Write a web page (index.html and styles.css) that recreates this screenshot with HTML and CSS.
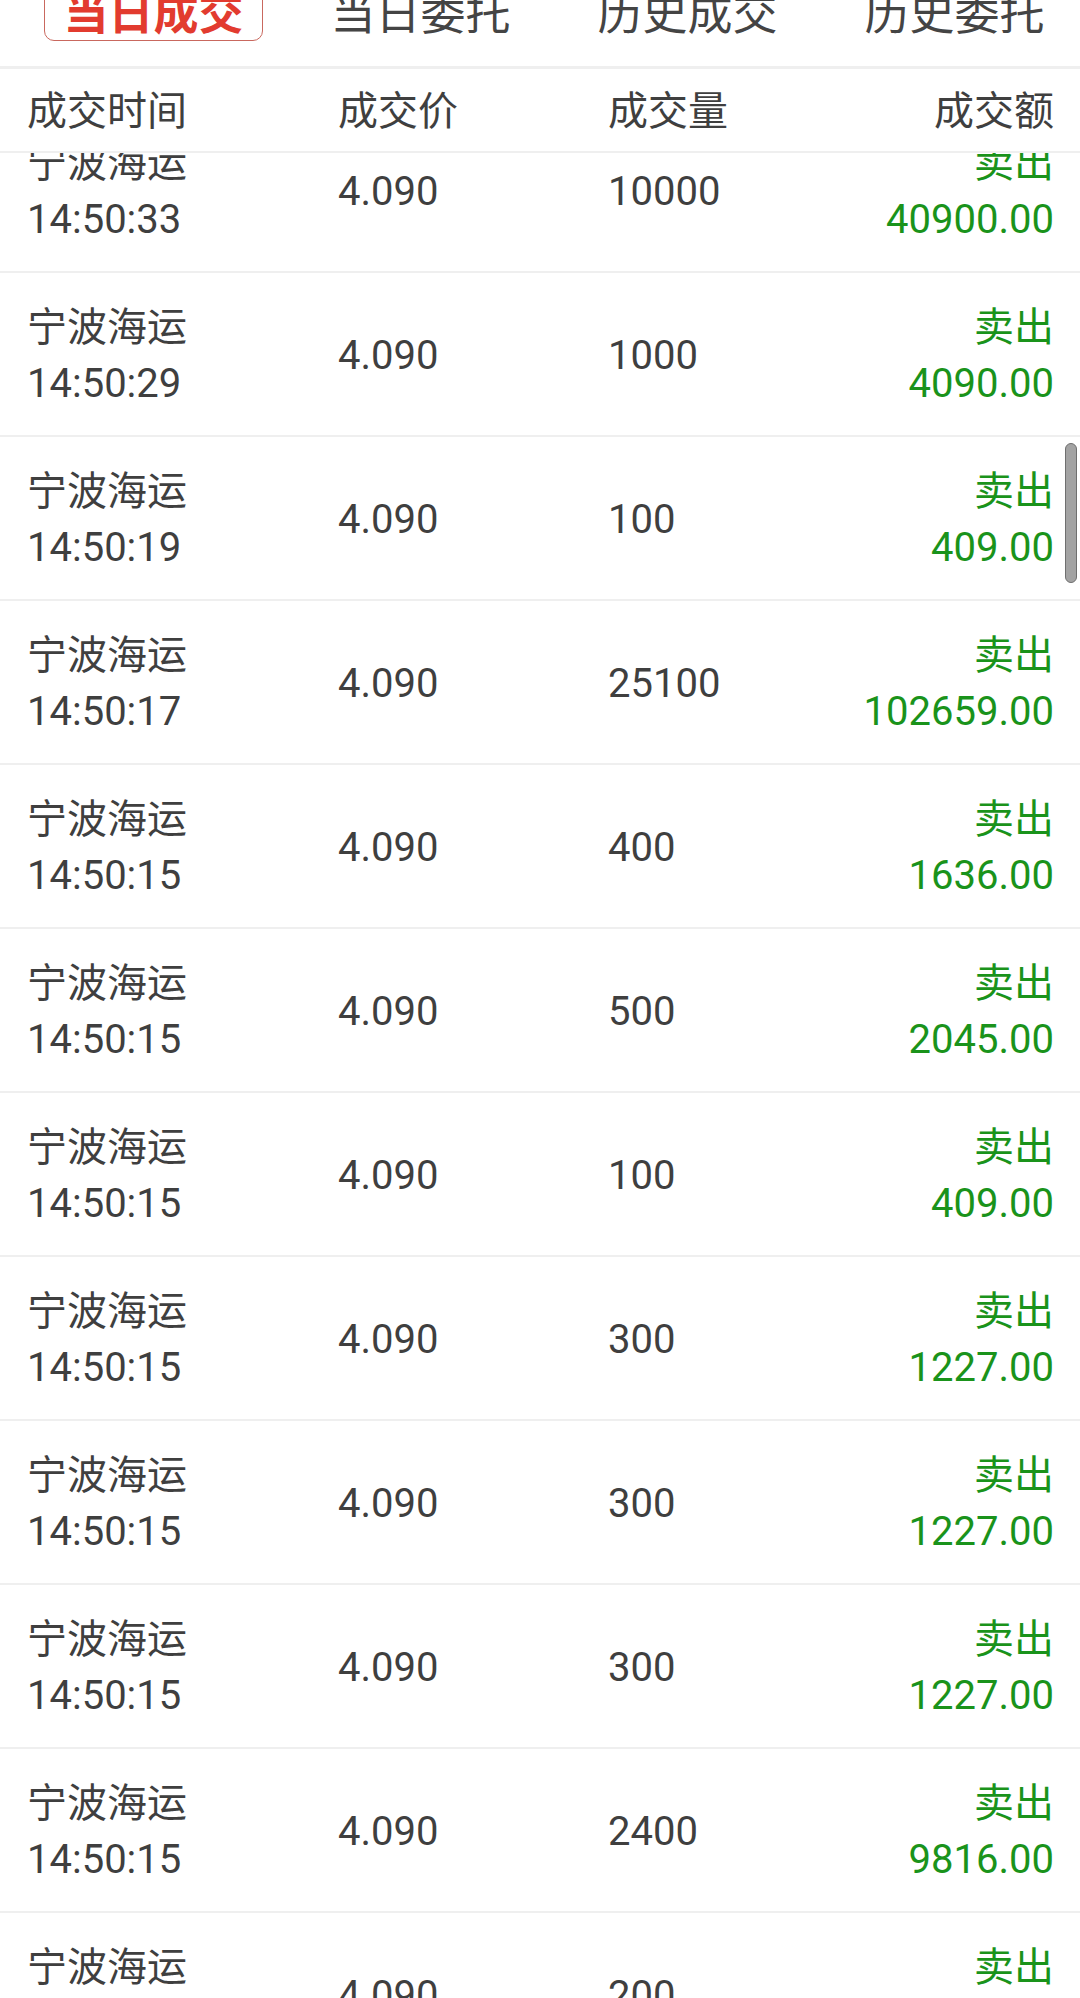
FILE: index.html
```html
<!DOCTYPE html>
<html lang="zh-CN">
<head>
<meta charset="utf-8">
<title>当日成交</title>
<link rel="stylesheet" href="styles.css">
</head>
<body>
<div class="page">
  <nav class="tabs">
    <div class="tab active">当日成交</div>
    <div class="tab">当日委托</div>
    <div class="tab">历史成交</div>
    <div class="tab">历史委托</div>
  </nav>
  <div class="head">
    <span>成交时间</span>
    <span>成交价</span>
    <span>成交量</span>
    <span class="right">成交额</span>
  </div>
  <div class="list">
    <div class="row first">
      <div class="c1"><div>宁波海运</div><div>14:50:33</div></div>
      <div class="c2">4.090</div>
      <div class="c3">10000</div>
      <div class="c4"><div>卖出</div><div>40900.00</div></div>
    </div>
    <div class="row">
      <div class="c1"><div>宁波海运</div><div>14:50:29</div></div>
      <div class="c2">4.090</div>
      <div class="c3">1000</div>
      <div class="c4"><div>卖出</div><div>4090.00</div></div>
    </div>
    <div class="row">
      <div class="c1"><div>宁波海运</div><div>14:50:19</div></div>
      <div class="c2">4.090</div>
      <div class="c3">100</div>
      <div class="c4"><div>卖出</div><div>409.00</div></div>
    </div>
    <div class="row">
      <div class="c1"><div>宁波海运</div><div>14:50:17</div></div>
      <div class="c2">4.090</div>
      <div class="c3">25100</div>
      <div class="c4"><div>卖出</div><div>102659.00</div></div>
    </div>
    <div class="row">
      <div class="c1"><div>宁波海运</div><div>14:50:15</div></div>
      <div class="c2">4.090</div>
      <div class="c3">400</div>
      <div class="c4"><div>卖出</div><div>1636.00</div></div>
    </div>
    <div class="row">
      <div class="c1"><div>宁波海运</div><div>14:50:15</div></div>
      <div class="c2">4.090</div>
      <div class="c3">500</div>
      <div class="c4"><div>卖出</div><div>2045.00</div></div>
    </div>
    <div class="row">
      <div class="c1"><div>宁波海运</div><div>14:50:15</div></div>
      <div class="c2">4.090</div>
      <div class="c3">100</div>
      <div class="c4"><div>卖出</div><div>409.00</div></div>
    </div>
    <div class="row">
      <div class="c1"><div>宁波海运</div><div>14:50:15</div></div>
      <div class="c2">4.090</div>
      <div class="c3">300</div>
      <div class="c4"><div>卖出</div><div>1227.00</div></div>
    </div>
    <div class="row">
      <div class="c1"><div>宁波海运</div><div>14:50:15</div></div>
      <div class="c2">4.090</div>
      <div class="c3">300</div>
      <div class="c4"><div>卖出</div><div>1227.00</div></div>
    </div>
    <div class="row">
      <div class="c1"><div>宁波海运</div><div>14:50:15</div></div>
      <div class="c2">4.090</div>
      <div class="c3">300</div>
      <div class="c4"><div>卖出</div><div>1227.00</div></div>
    </div>
    <div class="row">
      <div class="c1"><div>宁波海运</div><div>14:50:15</div></div>
      <div class="c2">4.090</div>
      <div class="c3">2400</div>
      <div class="c4"><div>卖出</div><div>9816.00</div></div>
    </div>
    <div class="row">
      <div class="c1"><div>宁波海运</div><div>14:50:15</div></div>
      <div class="c2">4.090</div>
      <div class="c3">200</div>
      <div class="c4"><div>卖出</div><div>818.00</div></div>
    </div>
  </div>
  <div class="scrollbar"></div>
</div>
</body>
</html>
```
FILE: styles.css
```css
html, body {
  margin: 0;
  padding: 0;
  background: #ffffff;
}
body {
  font-family: Roboto, "Noto Sans CJK SC", sans-serif;
  color: #3f3f3f;
  width: 1080px;
  height: 1998px;
  overflow: hidden;
}
.page {
  position: relative;
  width: 1080px;
  height: 1998px;
  overflow: hidden;
}
.tabs {
  box-sizing: border-box;
  height: 69px;
  display: flex;
  align-items: flex-end;
  gap: 48px;
  padding: 0 0 25px 44px;
  border-bottom: 3px solid #efefef;
}
.tab {
  flex: 0 0 219px;
  box-sizing: border-box;
  height: 68px;
  padding-top: 8px;
  line-height: 58px;
  border: 1px solid transparent;
  border-radius: 10px;
  text-align: center;
  font-family: "Noto Sans CJK SC", sans-serif;
  font-size: 45px;
  color: #444444;
}
.tab.active {
  border-color: #c9685e;
  color: #e23b2f;
  font-weight: 700;
}
.head,
.row {
  display: grid;
  grid-template-columns: 311px 270px 1fr auto;
  align-items: center;
  padding: 0 26px 0 27px;
}
.head {
  box-sizing: border-box;
  height: 84px;
  padding-bottom: 4px;
  font-size: 40px;
  border-bottom: 2px solid #efefef;
  font-family: "Noto Sans CJK SC", sans-serif;
  color: #3f3f3f;
  line-height: 56px;
}
.right {
  text-align: right;
}
.list {
  overflow: hidden;
}
.row {
  height: 164px;
  box-sizing: border-box;
  padding-top: 27px;
  padding-bottom: 25px;
  border-bottom: 2px solid #efefef;
  font-size: 40px;
  line-height: 56px;
}
.row.first {
  margin-top: -44px;
}
.c4 {
  text-align: right;
  color: #1a931b;
}
.scrollbar {
  position: absolute;
  left: 1065px;
  top: 443px;
  width: 10px;
  height: 138px;
  border: 1px solid #6f6f6f;
  border-radius: 6px;
  background: #a3a3a3;
}
```
